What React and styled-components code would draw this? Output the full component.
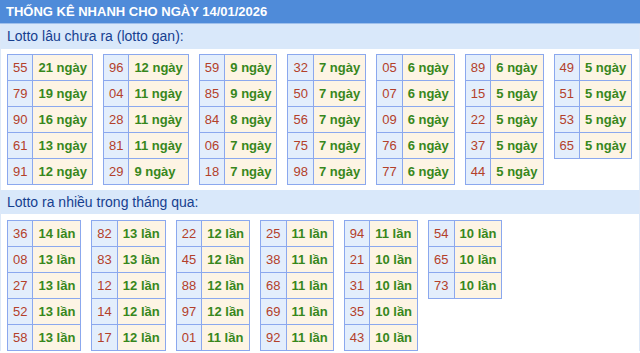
import React from "react";
import styled, { createGlobalStyle } from "styled-components";

const Global = createGlobalStyle`
  html, body { margin: 0; padding: 0; background: #fff; }
  body { font-family: "Liberation Sans", Arial, sans-serif; }
`;

const Wrap = styled.div`
  width: 640px;
  box-sizing: border-box;
  border-left: 1px solid #dce8f8;
  border-right: 1px solid #dce8f8;
`;

const Header = styled.div`
  height: 23px;
  margin: 0 -1px;
  background: #4f8bd9;
  border-bottom: 1px solid #9fc0ec;
  color: #fff;
  font-weight: bold;
  font-size: 13px;
  line-height: 23px;
  padding-left: 6px;
`;

const SubHead = styled.div`
  height: ${(p) => p.$h}px;
  background: #d9e8fa;
  color: #163f90;
  font-size: 14px;
  line-height: ${(p) => p.$h}px;
  padding-left: 6px;
  margin-top: ${(p) => p.$mt}px;
`;

const Grid = styled.div`
  display: flex;
  flex-wrap: nowrap;
  align-items: flex-start;
  gap: 10px;
  padding: ${(p) => p.$pt}px 0 0 6px;
`;

const Table = styled.table`
  border-collapse: collapse;
  font-size: 13px;
  flex: none;
`;

const Row = styled.tr`
  height: 26px;
`;

const NumCell = styled.td`
  border: 1px solid #8ba8ee;
  background: #e3eefc;
  color: #b3402a;
  padding: 0 5px;
  text-align: center;
  height: 25px;
  box-sizing: border-box;
`;

const ValCell = styled.td`
  border: 1px solid #8ba8ee;
  background: #fdf4e4;
  color: #37871c;
  font-weight: bold;
  padding: 0 5px;
  text-align: left;
  white-space: nowrap;
`;

const gan = [
  [["55", 21], ["79", 19], ["90", 16], ["61", 13], ["91", 12]],
  [["96", 12], ["04", 11], ["28", 11], ["81", 11], ["29", 9]],
  [["59", 9], ["85", 9], ["84", 8], ["06", 7], ["18", 7]],
  [["32", 7], ["50", 7], ["56", 7], ["75", 7], ["98", 7]],
  [["05", 6], ["07", 6], ["09", 6], ["76", 6], ["77", 6]],
  [["89", 6], ["15", 5], ["22", 5], ["37", 5], ["44", 5]],
  [["49", 5], ["51", 5], ["53", 5], ["65", 5]],
];

const nhieu = [
  [["36", 14], ["08", 13], ["27", 13], ["52", 13], ["58", 13]],
  [["82", 13], ["83", 13], ["12", 12], ["14", 12], ["17", 12]],
  [["22", 12], ["45", 12], ["88", 12], ["97", 12], ["01", 11]],
  [["25", 11], ["38", 11], ["68", 11], ["69", 11], ["92", 11]],
  [["94", 11], ["21", 10], ["31", 10], ["35", 10], ["43", 10]],
  [["54", 10], ["65", 10], ["73", 10]],
];

function Block({ rows, unit }) {
  return (
    <Table>
      <tbody>
        {rows.map(([n, v]) => (
          <Row key={n}>
            <NumCell>{n}</NumCell>
            <ValCell>
              {v} {unit}
            </ValCell>
          </Row>
        ))}
      </tbody>
    </Table>
  );
}

export default function App() {
  return (
    <>
      <Global />
      <Wrap>
        <Header>THỐNG KÊ NHANH CHO NGÀY 14/01/2026</Header>
        <SubHead $h={25} $mt={0}>Lotto lâu chưa ra (lotto gan):</SubHead>
        <Grid $pt={5}>
          {gan.map((g, i) => (
            <Block key={i} rows={g} unit="ngày" />
          ))}
        </Grid>
        <SubHead $h={24} $mt={5}>Lotto ra nhiều trong tháng qua:</SubHead>
        <Grid $pt={6}>
          {nhieu.map((g, i) => (
            <Block key={i} rows={g} unit="lần" />
          ))}
        </Grid>
      </Wrap>
    </>
  );
}
